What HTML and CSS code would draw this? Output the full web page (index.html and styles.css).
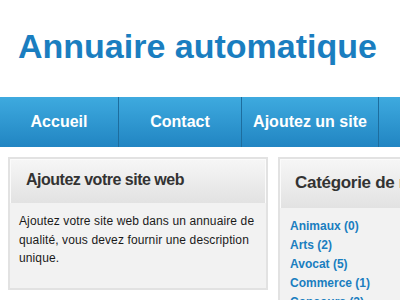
FILE: index.html
```html
<!DOCTYPE html>
<html lang="fr">
<head>
<meta charset="utf-8">
<title>Annuaire automatique</title>
<link rel="stylesheet" href="styles.css">
</head>
<body>
<header class="site-header">
  <h1 class="site-title">Annuaire automatique</h1>
</header>
<nav class="main-nav">
  <a class="nav-item nav-home" href="#">Accueil</a>
  <a class="nav-item nav-contact" href="#">Contact</a>
  <a class="nav-item nav-add" href="#">Ajoutez un site</a>
</nav>
<main class="content">
  <section class="box box-left">
    <h2 class="box-head">Ajoutez votre site web</h2>
    <div class="box-body">
      <p class="box-text">Ajoutez votre site web dans un annuaire de qualité, vous devez fournir une description unique.</p>
    </div>
  </section>
  <section class="box box-right">
    <h2 class="box-head box-head-lg">Catégorie de recherche</h2>
    <ul class="cat-list">
      <li><a href="#">Animaux (0)</a></li>
      <li><a href="#">Arts (2)</a></li>
      <li><a href="#">Avocat (5)</a></li>
      <li><a href="#">Commerce (1)</a></li>
      <li><a href="#">Concours (2)</a></li>
      <li><a href="#">Culture (3)</a></li>
    </ul>
  </section>
</main>
</body>
</html>
```
FILE: styles.css
```css
html, body {
  margin: 0;
  padding: 0;
  overflow: hidden;
  background: #fff;
  font-family: "Liberation Sans", Arial, sans-serif;
}

.site-header {
  padding: 26px 0 31px 18px;
}

.site-title {
  margin: 0;
  font-size: 34px;
  line-height: 40px;
  font-weight: bold;
  color: #1a7ec0;
  white-space: nowrap;
}

.main-nav {
  display: flex;
  height: 50px;
  background: linear-gradient(#3eaadf, #2185c2);
}

.nav-item {
  display: block;
  box-sizing: border-box;
  height: 50px;
  line-height: 50px;
  text-align: center;
  color: #fff;
  font-size: 16px;
  font-weight: bold;
  text-decoration: none;
  border-right: 1px solid #1d6d9e;
  white-space: nowrap;
}

.nav-home { width: 119px; }
.nav-contact { width: 123px; }
.nav-add { width: 137px; }

.content {
  display: flex;
  gap: 10px;
  padding: 10px 0 0 8px;
  align-items: flex-start;
}

.box {
  flex: none;
  box-sizing: border-box;
  border: 2px solid #e2e2e2;
  background: #f2f2f2;
}

.box-left { width: 260px; }
.box-right { width: 260px; }

.box-head {
  margin: 0;
  border: 1px solid #fbfbfb;
  border-bottom: 0;
  background: linear-gradient(#f6f6f6, #e2e2e2);
  padding: 10px 15px 13px;
  font-size: 16px;
  line-height: 20px;
  font-weight: bold;
  letter-spacing: -0.5px;
  color: #333;
  white-space: nowrap;
  overflow: hidden;
}

.box-head-lg {
  padding: 12px 14px 14px;
  font-size: 17px;
  line-height: 22px;
  letter-spacing: -0.3px;
}

.box-body {
  padding: 9px 9px 20px;
}

.box-text {
  margin: 0;
  font-size: 12px;
  line-height: 18.6px;
  letter-spacing: 0.12px;
  color: #1a1a1a;
}

.cat-list {
  list-style: none;
  margin: 0;
  padding: 9px 10px 10px;
}

.cat-list li {
  font-size: 12px;
  line-height: 19px;
  font-weight: bold;
}

.cat-list a {
  color: #1a7ec0;
  text-decoration: none;
}
```
